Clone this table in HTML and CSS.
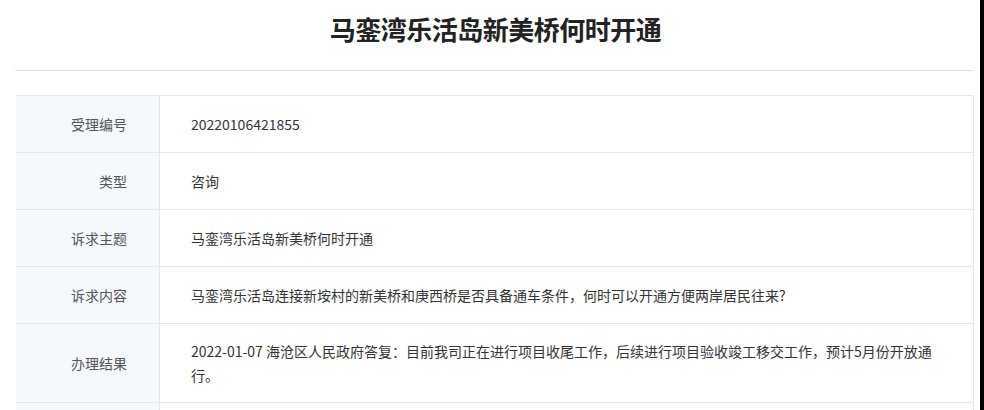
FILE: index.html
```html
<!DOCTYPE html>
<html>
<head>
    <meta charset="utf-8">
    <link rel="stylesheet" href="styles.css">
</head>
<body>
    <div class="page">
        <h1 class="title">马銮湾乐活岛新美桥何时开通</h1>
        <div class="divider"></div>
        <table class="detail">
            <tr>
                <th>受理编号</th>
                <td>20220106421855</td>
            </tr>
            <tr>
                <th>类型</th>
                <td>咨询</td>
            </tr>
            <tr>
                <th>诉求主题</th>
                <td>马銮湾乐活岛新美桥何时开通</td>
            </tr>
            <tr>
                <th>诉求内容</th>
                <td>马銮湾乐活岛连接新垵村的新美桥和庚西桥是否具备通车条件，何时可以开通方便两岸居民往来?</td>
            </tr>
            <tr>
                <th class="tall">办理结果</th>
                <td class="tall">2022-01-07 海沧区人民政府答复：目前我司正在进行项目收尾工作，后续进行项目验收竣工移交工作，预计5月份开放通行。</td>
            </tr>
            <tr>
                <th></th>
                <td></td>
            </tr>
        </table>
    </div>
</body>
</html>
```

FILE: styles.css
```css
html {
    background: #000;
}
body {
    margin: 0;
    font: 14px "Noto Sans CJK SC", "Noto Sans", sans-serif;
    color: #333;
}
.page {
    width: 980px;
    height: 410px;
    overflow: hidden;
    background: #fff;
}
.title {
    margin: 0;
    padding: 11px 0 0 11px;
    height: 47px;
    text-align: center;
    font-size: 26px;
    line-height: 36px;
    font-weight: bold;
    color: #222;
    letter-spacing: -0.5px;
}
.divider {
    margin: 12px 7px 0 15px;
    border-top: 1px solid #e3e3e3;
}
.detail {
    margin: 24px 0 0 16px;
    width: 958px;
    border-collapse: collapse;
    border-top: 1px solid #e6e8ec;
    border-right: 1px solid #e6e8ec;
}
.detail th,
.detail td {
    padding: 16px 31px;
    line-height: 24px;
    border-bottom: 1px solid #e3e7ed;
    text-align: left;
    vertical-align: middle;
}
.detail th {
    width: 80px;
    padding-right: 32px;
    text-align: right;
    font-weight: normal;
    color: #555;
    background: #f5f8fd;
    border-right: 1px solid #dfe3ea;
}
.detail td {
    color: #333;
    padding-right: 24px;
}
.detail .tall {
    padding-top: 15px;
    padding-bottom: 15px;
}
```
